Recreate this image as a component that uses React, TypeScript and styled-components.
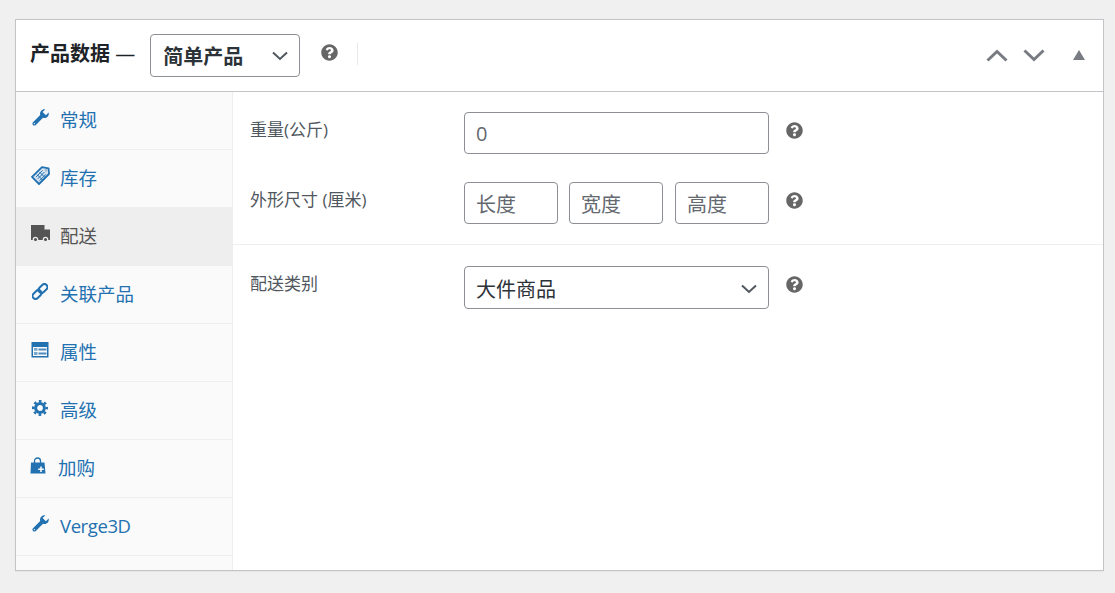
import { ReactNode } from "react"
import styled, { createGlobalStyle } from "styled-components"
import { FaQuestionCircle } from "react-icons/fa"

const FONT = `"Open Sans", "Noto Sans CJK SC", sans-serif`

const GlobalStyle = createGlobalStyle`
    html, body {
        margin: 0;
        background: #f0f0f1;
        font-family: ${FONT};
    }
    * {
        box-sizing: border-box;
    }
`

const Page = styled.div`
    padding: 19px 11px 22px 15px;
`

const Panel = styled.div`
    height: 552px;
    display: flex;
    flex-direction: column;
    background: #fff;
    border: 1px solid #c3c4c7;
    box-shadow: 0 1px 1px rgba(0, 0, 0, 0.04);
`

const Header = styled.div`
    flex: none;
    height: 72px;
    display: flex;
    align-items: center;
    padding: 0 14px;
    border-bottom: 1px solid #c3c4c7;
`

const Title = styled.h2`
    margin: -4px 15px 0 0;
    font-size: 20px;
    line-height: 28px;
    font-weight: 700;
    color: #1d2327;
`

const Dash = styled.span`
    font-weight: 400;
`

const SelectBox = styled.div<{ $width: number; $bold?: boolean }>`
    width: ${(p) => p.$width}px;
    height: 43px;
    display: flex;
    align-items: center;
    justify-content: space-between;
    padding: ${(p) => (p.$bold ? "0 11px 0 12px" : "2px 11px 0 11px")};
    border: 1px solid #8c8f94;
    border-radius: 4px;
    background: #fff;
    color: #2c3338;
    font-size: 20px;
    font-weight: ${(p) => (p.$bold ? 600 : 400)};
`

const HeaderHelp = styled.div`
    display: flex;
    margin: -7px 0 0 21px;
    color: #666;
`

const VerticalRule = styled.div`
    width: 1px;
    height: 22px;
    margin: -4px 0 0 19px;
    background: #e8e8e8;
`

const HeaderActions = styled.div`
    margin-left: auto;
    display: flex;
    align-items: center;
    margin-right: 4px;
    margin-top: -1px;
    color: #787c82;
`

const ArrowButton = styled.svg`
    display: block;
    width: 22px;
    height: 13px;
    margin-right: 15px;
`

const CollapseArrow = styled.svg`
    display: block;
    width: 12px;
    height: 10px;
    margin-left: 13px;
    margin-top: -1px;
`

const Body = styled.div`
    flex: 1;
    display: flex;
    min-height: 0;
`

const Sidebar = styled.ul`
    flex: none;
    width: 217px;
    margin: 0;
    padding: 0;
    list-style: none;
    background: #fafafa;
    border-right: 1px solid #eee;
`

const TabItem = styled.li<{ $active?: boolean; $tight?: boolean }>`
    height: 58px;
    display: flex;
    align-items: center;
    padding: 0 0 3px 14px;
    border-bottom: 1px solid #eee;
    background: ${(p) => (p.$active ? "#eee" : "transparent")};
    color: ${(p) => (p.$active ? "#555" : "#2271b1")};
    font-size: 18.5px;
    letter-spacing: ${(p) => (p.$tight ? "-0.4px" : "normal")};
`

const TabIcon = styled.span<{ $width: number; $gap: number }>`
    flex: none;
    width: ${(p) => p.$width}px;
    display: flex;
    justify-content: center;
    margin: -3px ${(p) => p.$gap}px 0 0;

    svg {
        display: block;
    }
`

const Content = styled.div`
    flex: 1;
    display: flex;
    flex-direction: column;
`

const FieldGroup = styled.div<{ $last?: boolean }>`
    display: flex;
    flex-direction: column;
    gap: 28px;
    padding: ${(p) => (p.$last ? "21px 0 20px 17px" : "20px 0 20px 17px")};
    border-bottom: ${(p) => (p.$last ? "none" : "1px solid #eee")};
`

const Field = styled.div`
    display: flex;
    align-items: flex-start;
`

const Label = styled.label`
    width: 214px;
    padding-top: 6px;
    font-size: 17px;
    line-height: 24px;
    color: #50575e;
`

const TextBox = styled.div<{ $width: number }>`
    width: ${(p) => p.$width}px;
    height: 42px;
    display: flex;
    align-items: center;
    padding: 0 11px;
    border: 1px solid #8c8f94;
    border-radius: 4px;
    background: #fff;
    color: #646970;
    font-size: 20px;
`

const InputRow = styled.div`
    width: 305px;
    display: flex;
    gap: 11px;

    & > :last-child {
        margin-left: auto;
    }
`

const FieldHelp = styled.div`
    display: flex;
    margin: 10px 0 0 17px;
    color: #666;
`

function WrenchIcon() {
    return (
        <svg width="17" height="17" viewBox="0 0 17 17" fill="currentColor">
            <path d="M13.2 0.4 L10.6 3 L13.9 6.3 L16.6 3.6 C17.2 6 16 8.5 13.5 9 C12.6 9.2 11.8 9.1 11 8.8 L3.8 16 C3 16.8 1.8 16.8 1 16 C0.2 15.2 0.2 14 1 13.2 L8.2 6 C7.8 4.8 8 3.2 9 2 C10 0.8 11.6 0.2 13.2 0.4 Z" />
            <circle cx="2.4" cy="14.6" r="0.7" fill="#fafafa" />
        </svg>
    )
}

function TagIcon() {
    return (
        <svg width="19" height="19" viewBox="0 0 19 19" fill="none" stroke="currentColor">
            <path d="M11 1.2 L17.6 2.4 L18 8 L8 18 L1 10.8 Z" fill="#d4e3ef" strokeWidth="1.8" strokeLinejoin="round" />
            <g strokeWidth="1">
                <path d="M5 11 L11.5 4.5" />
                <path d="M6.8 12.8 L13.5 6" />
                <path d="M8.6 14.6 L15 8.2" />
                <path d="M6 8.5 L11.5 14" />
                <path d="M8.5 6 L14 11.5" />
            </g>
            <circle cx="15" cy="4.3" r="1.2" fill="#9db8cf" stroke="none" />
        </svg>
    )
}

function TruckIcon() {
    return (
        <svg width="19" height="17" viewBox="0 0 19 17" fill="#555">
            <path d="M0 0 H13.5 V4.5 H19 V15 H0 Z" />
            <circle cx="4.5" cy="14.5" r="2.2" stroke="#eee" strokeWidth="1.2" />
            <circle cx="14.5" cy="14.5" r="2.2" stroke="#eee" strokeWidth="1.2" />
        </svg>
    )
}

function LinkIcon() {
    return (
        <svg width="16" height="17" viewBox="0 0 16 17" fill="none" stroke="currentColor" strokeWidth="2">
            <rect x="6" y="2.5" width="10" height="6" rx="3" transform="rotate(-45 11 5.5)" />
            <rect x="0" y="8.5" width="10" height="6" rx="3" transform="rotate(-45 5 11.5)" />
        </svg>
    )
}

function TableIcon() {
    return (
        <svg width="18" height="16" viewBox="0 0 18 16" fill="currentColor">
            <path fillRule="evenodd" d="M0.5 0 H17.5 V15.5 H0.5 Z M2 5 V14 H16 V5 Z" />
            <path d="M3 6 H6.5 V8.8 H3 Z M3 10 H6.5 V13 H3 Z" opacity="0.6" />
            <path d="M7.5 6.5 H15.5 V8.5 H7.5 Z M7.5 10.5 H15.5 V12.5 H7.5 Z" opacity="0.8" />
        </svg>
    )
}

function GearIcon() {
    return (
        <svg width="16" height="16" viewBox="0 0 16 16" fill="none" stroke="currentColor">
            <circle cx="8" cy="8" r="4.4" strokeWidth="3" />
            <circle cx="8" cy="8" r="6.8" strokeWidth="2.4" strokeDasharray="2.67 2.67" strokeDashoffset="1.33" />
        </svg>
    )
}

function BagIcon() {
    return (
        <svg width="16" height="17" viewBox="0 0 16 17" fill="currentColor">
            <path d="M4.5 6 V4 C4.5 2 6 1 7.5 1 C9 1 10.5 2 10.5 4 V6" fill="none" stroke="currentColor" strokeWidth="1.3" />
            <path d="M1 5.5 H14.5 L15.5 16.5 H0.5 Z" />
            <path d="M10.2 9.5 H11.8 V11.5 H13.8 V13 H11.8 V15 H10.2 V13 H8.2 V11.5 H10.2 Z" fill="#fafafa" />
        </svg>
    )
}

const tabs: { label: string; icon: ReactNode; width?: number; gap?: number; active?: boolean; tight?: boolean }[] = [
    { label: "常规", icon: <WrenchIcon /> },
    { label: "库存", icon: <TagIcon /> },
    { label: "配送", icon: <TruckIcon />, active: true },
    { label: "关联产品", icon: <LinkIcon /> },
    { label: "属性", icon: <TableIcon /> },
    { label: "高级", icon: <GearIcon /> },
    { label: "加购", icon: <BagIcon />, width: 16, gap: 12 },
    { label: "Verge3D", icon: <WrenchIcon />, tight: true },
]

function Chevron() {
    return (
        <svg width="16" height="10" viewBox="0 0 16 10" fill="none" stroke="#50575e" strokeWidth="2">
            <path d="M1 1.5 L8 8 L15 1.5" />
        </svg>
    )
}

export default function App() {
    return (
        <Page>
            <GlobalStyle />
            <Panel>
                <Header>
                    <Title>
                        产品数据 <Dash>—</Dash>
                    </Title>
                    <SelectBox $width={150} $bold>
                        简单产品
                        <Chevron />
                    </SelectBox>
                    <HeaderHelp>
                        <FaQuestionCircle size={17} />
                    </HeaderHelp>
                    <VerticalRule />
                    <HeaderActions>
                        <ArrowButton viewBox="0 0 22 13" fill="none" stroke="currentColor" strokeWidth="3">
                            <path d="M1.5 11.5 L11 2.5 L20.5 11.5" />
                        </ArrowButton>
                        <ArrowButton viewBox="0 0 22 13" fill="none" stroke="currentColor" strokeWidth="3">
                            <path d="M1.5 1.5 L11 10.5 L20.5 1.5" />
                        </ArrowButton>
                        <CollapseArrow viewBox="0 0 12 10" fill="currentColor">
                            <path d="M6 0 L12 10 H0 Z" />
                        </CollapseArrow>
                    </HeaderActions>
                </Header>
                <Body>
                    <Sidebar>
                        {tabs.map((tab) => (
                            <TabItem key={tab.label} $active={tab.active} $tight={tab.tight}>
                                <TabIcon $width={tab.width ?? 20} $gap={tab.gap ?? 10}>
                                    {tab.icon}
                                </TabIcon>
                                {tab.label}
                            </TabItem>
                        ))}
                    </Sidebar>
                    <Content>
                        <FieldGroup>
                            <Field>
                                <Label>重量(公斤)</Label>
                                <TextBox $width={305}>0</TextBox>
                                <FieldHelp>
                                    <FaQuestionCircle size={17} />
                                </FieldHelp>
                            </Field>
                            <Field>
                                <Label>外形尺寸 (厘米)</Label>
                                <InputRow>
                                    <TextBox $width={94}>长度</TextBox>
                                    <TextBox $width={94}>宽度</TextBox>
                                    <TextBox $width={94}>高度</TextBox>
                                </InputRow>
                                <FieldHelp>
                                    <FaQuestionCircle size={17} />
                                </FieldHelp>
                            </Field>
                        </FieldGroup>
                        <FieldGroup $last>
                            <Field>
                                <Label>配送类别</Label>
                                <SelectBox $width={305}>
                                    大件商品
                                    <Chevron />
                                </SelectBox>
                                <FieldHelp>
                                    <FaQuestionCircle size={17} />
                                </FieldHelp>
                            </Field>
                        </FieldGroup>
                    </Content>
                </Body>
            </Panel>
        </Page>
    )
}
